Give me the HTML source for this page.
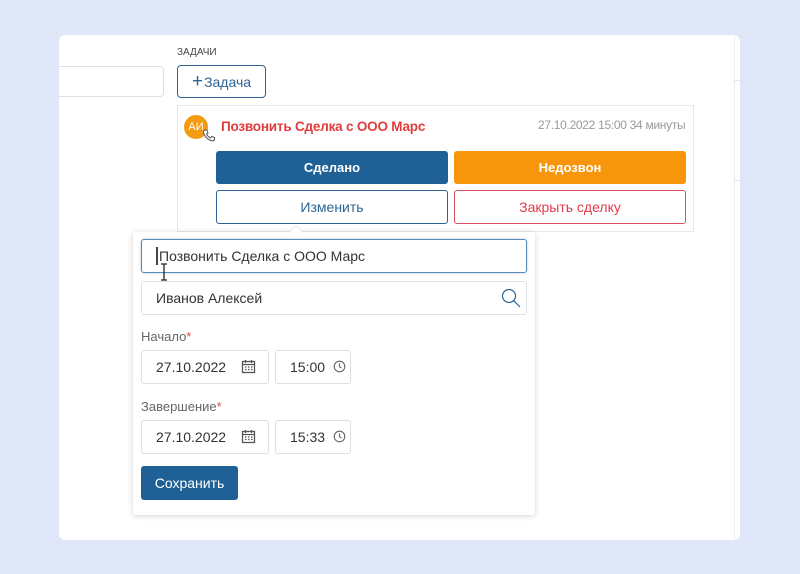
<!DOCTYPE html>
<html><head><meta charset="utf-8"><style>
*{box-sizing:border-box;margin:0;padding:0}
body{width:800px;height:574px;background:#dfe7f8;font-family:"Liberation Sans",sans-serif;position:relative;overflow:hidden}
.a{position:absolute}
.card{left:59px;top:35px;width:681px;height:505px;background:#fff;border-radius:6px;overflow:hidden}
.btn{position:absolute;border-radius:3px;display:flex;align-items:center;justify-content:center;font-size:14px}
.inp{position:absolute;border:1px solid #dcdfe4;border-radius:3px;color:#333;display:flex;align-items:center;padding-left:14px;font-size:14px}
.lbl{position:absolute;font-size:13px;color:#666}
.lbl b{color:#e04848;font-weight:normal}
</style></head><body>
<div class="a card">
  <div class="a" style="left:675px;top:0;width:1px;height:505px;background:#eceef2"></div>
  <div class="a" style="left:675px;top:45px;width:6px;height:1px;background:#e4e6ea"></div>
  <div class="a" style="left:675px;top:145px;width:6px;height:1px;background:#e4e6ea"></div>
  <div class="a" style="left:-5px;top:31px;width:110px;height:31px;border:1px solid #dcdfe4;border-radius:4px"></div>
</div>
<div class="a" style="left:177px;top:47px;font-size:10px;color:#444">ЗАДАЧИ</div>
<div class="btn" style="left:177px;top:65px;width:89px;height:33px;border:1px solid #2d6494;color:#2d6494;border-radius:4px;font-size:14px"><span style="font-size:19px;margin-right:1px">+</span>Задача</div>
<div class="a" style="left:177px;top:105px;width:517px;height:127px;border:1px solid #e6e8ec"></div>
<div class="a" style="left:184px;top:115px;width:24px;height:24px;border-radius:50%;background:#f39c12;color:#fff;font-size:11px;display:flex;align-items:center;justify-content:center">АИ</div>
<svg class="a" style="left:202px;top:128px" width="14" height="14" viewBox="0 0 14 14"><path d="M3 2 L5 2 L6 5 L4.5 6 C5.5 8 6.5 9 8.5 10 L9.5 8.5 L12.5 9.5 L12.5 11.5 C12 12.5 11 13 10 12.8 C6 12 2.5 8.5 1.5 4.5 C1.3 3.3 2 2.3 3 2Z" fill="#fff" stroke="#555" stroke-width="1"/></svg>
<div class="a" style="left:221px;top:119px;font-size:13.5px;font-weight:bold;color:#e03c3c;letter-spacing:-0.2px">Позвонить Сделка с ООО Марс</div>
<div class="a" style="left:538px;top:118px;font-size:12px;color:#999;letter-spacing:-0.3px">27.10.2022 15:00 34 минуты</div>
<div class="btn" style="left:216px;top:151px;width:232px;height:33px;background:#1f6196;color:#fff;font-weight:bold;font-size:13px">Сделано</div>
<div class="btn" style="left:454px;top:151px;width:232px;height:33px;background:#f7960a;color:#fff;font-weight:bold;font-size:13px">Недозвон</div>
<div class="btn" style="left:216px;top:190px;width:232px;height:34px;border:1px solid #2d6494;color:#2d6494">Изменить</div>
<div class="btn" style="left:454px;top:190px;width:232px;height:34px;border:1px solid #e05060;color:#e03c4c">Закрыть сделку</div>
<div class="a" style="left:133px;top:232px;width:402px;height:283px;background:#fff;border-radius:3px;box-shadow:0 1px 6px rgba(0,0,0,.18)"></div>
<div class="a" style="left:291px;top:227px;width:10px;height:10px;background:#fff;transform:rotate(45deg);border-left:1px solid #e6e8ec;border-top:1px solid #e6e8ec"></div>
<div class="inp" style="left:141px;top:239px;width:386px;height:34px;border-color:#5a8ab8;box-shadow:0 0 2px rgba(40,100,160,.4)"><span style="border-left:2px solid #444;height:18px;margin-right:1px"></span>Позвонить Сделка с ООО Марс</div>
<svg class="a" style="left:160px;top:263px" width="8" height="18" viewBox="0 0 8 18"><path d="M1 1H7M4 1V17M1 17H7" stroke="#222" stroke-width="1.3" fill="none"/></svg>
<div class="inp" style="left:141px;top:281px;width:386px;height:34px">Иванов Алексей</div>
<svg class="a" style="left:500px;top:287px" width="22" height="22" viewBox="0 0 22 22"><circle cx="9" cy="9" r="6.5" fill="none" stroke="#2d6494" stroke-width="1.2"/><path d="M13.8 13.8 L20 20" stroke="#2d6494" stroke-width="1.2"/></svg>
<div class="lbl" style="left:141px;top:329px">Начало<b>*</b></div>
<div class="inp" style="left:141px;top:350px;width:128px;height:34px">27.10.2022</div>
<div class="inp" style="left:275px;top:350px;width:76px;height:34px">15:00</div>
<div class="lbl" style="left:141px;top:399px">Завершение<b>*</b></div>
<div class="inp" style="left:141px;top:420px;width:128px;height:34px">27.10.2022</div>
<div class="inp" style="left:275px;top:420px;width:76px;height:34px">15:33</div>
<svg class="a" style="left:241px;top:359px" width="15" height="15" viewBox="0 0 15 15"><rect x="1.5" y="2.5" width="12" height="11" fill="none" stroke="#555" stroke-width="1.3"/><path d="M1.5 5.5H13.5M4.5 1V4M10.5 1V4" stroke="#555" stroke-width="1.3"/><path d="M4 8h1.5M7 8h1.5M10 8h1.5M4 10.5h1.5M7 10.5h1.5M10 10.5h1.5" stroke="#555" stroke-width="1.3"/></svg>
<svg class="a" style="left:241px;top:429px" width="15" height="15" viewBox="0 0 15 15"><rect x="1.5" y="2.5" width="12" height="11" fill="none" stroke="#555" stroke-width="1.3"/><path d="M1.5 5.5H13.5M4.5 1V4M10.5 1V4" stroke="#555" stroke-width="1.3"/><path d="M4 8h1.5M7 8h1.5M10 8h1.5M4 10.5h1.5M7 10.5h1.5M10 10.5h1.5" stroke="#555" stroke-width="1.3"/></svg>
<svg class="a" style="left:333px;top:360px" width="13" height="13" viewBox="0 0 13 13"><circle cx="6.5" cy="6.5" r="5.3" fill="none" stroke="#666" stroke-width="1.1"/><path d="M6.5 3.5V6.8L8.5 8" fill="none" stroke="#666" stroke-width="1.1"/></svg>
<svg class="a" style="left:333px;top:430px" width="13" height="13" viewBox="0 0 13 13"><circle cx="6.5" cy="6.5" r="5.3" fill="none" stroke="#666" stroke-width="1.1"/><path d="M6.5 3.5V6.8L8.5 8" fill="none" stroke="#666" stroke-width="1.1"/></svg>
<div class="btn" style="left:141px;top:466px;width:97px;height:34px;background:#1f6196;color:#fff;font-size:14px">Сохранить</div>
</body></html>
